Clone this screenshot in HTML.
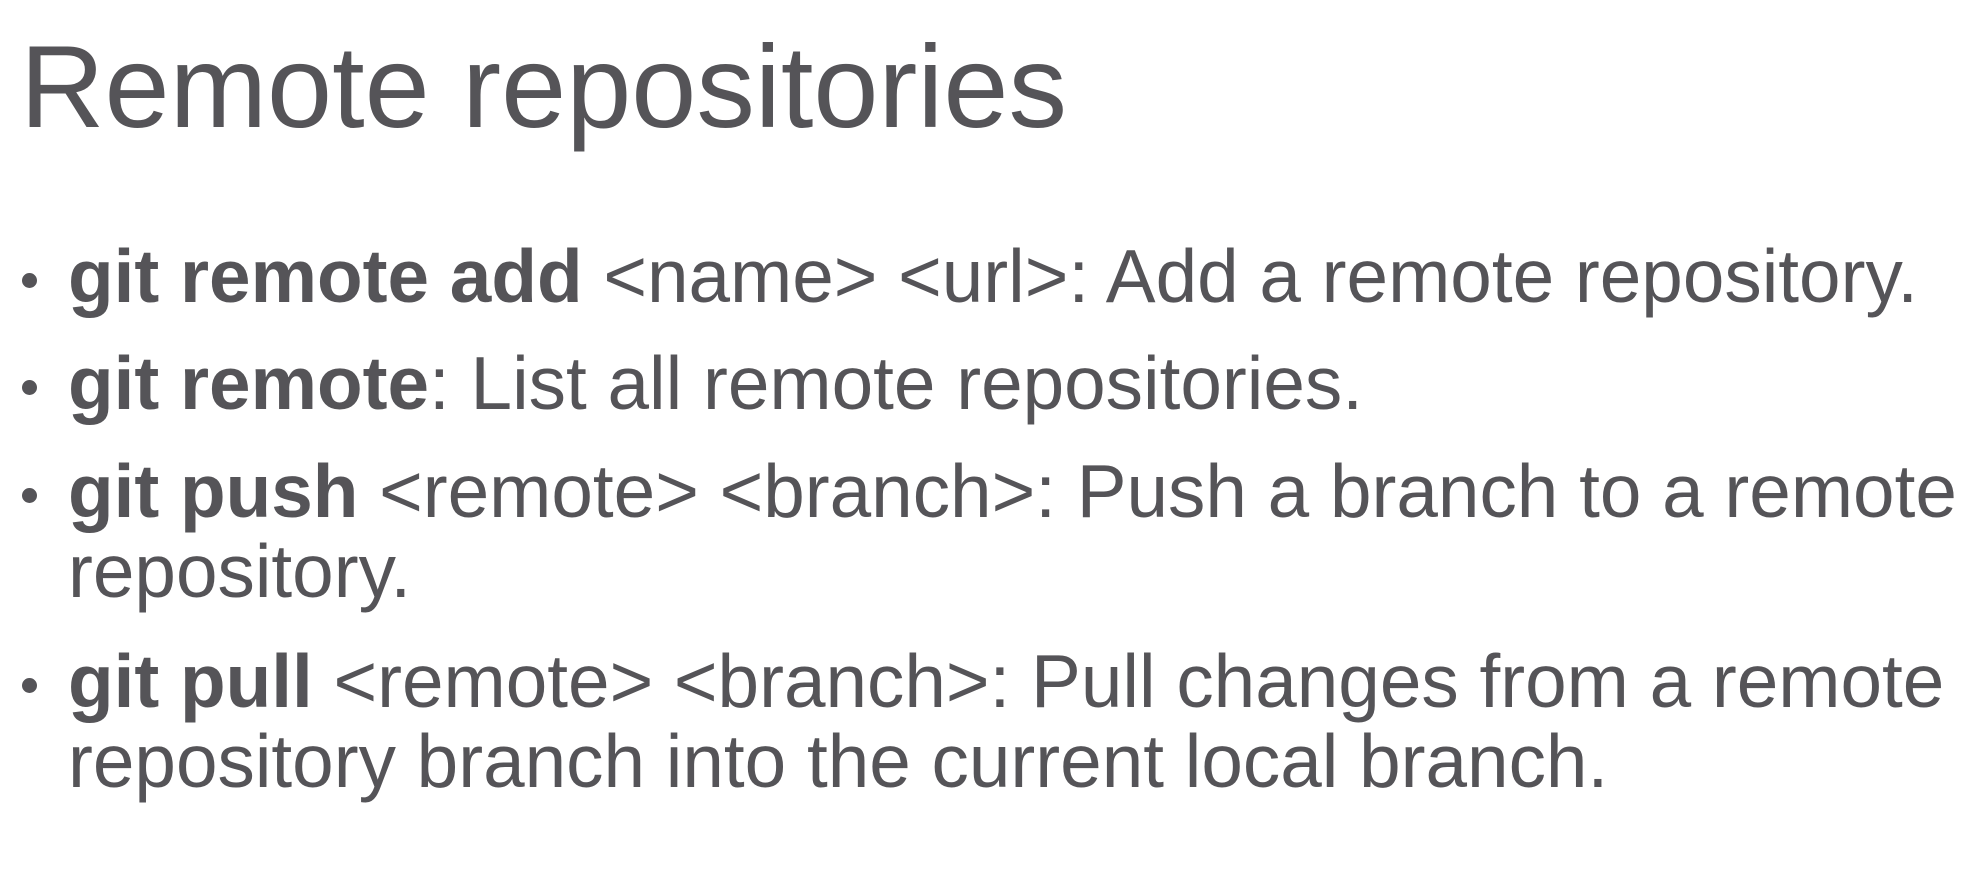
<!DOCTYPE html>
<html><head><style>
html,body{margin:0;padding:0;background:#fff;}
body{width:1985px;height:873px;position:relative;overflow:hidden;font-family:"Liberation Sans",Arial,sans-serif;color:#555458;}
.t{position:absolute;left:20px;top:22px;font-size:117px;line-height:130px;white-space:nowrap;}
.l{position:absolute;left:68px;font-size:74.7px;line-height:80px;white-space:nowrap;}
.l b{font-weight:bold;}
.d{position:absolute;left:22px;width:15px;height:15px;border-radius:50%;background:#555458;}
</style></head><body>
<div class="t">Remote repositories</div>
<div class="d" style="top:273px"></div>
<div class="l" style="top:236px"><b>git remote add</b> &lt;name&gt; &lt;url&gt;: Add a remote repository.</div>
<div class="d" style="top:380px"></div>
<div class="l" style="top:343px"><b>git remote</b>: List all remote repositories.</div>
<div class="d" style="top:488px"></div>
<div class="l" style="top:451px"><b>git push</b> &lt;remote&gt; &lt;branch&gt;: Push a branch to a remote<br>repository.</div>
<div class="d" style="top:678px"></div>
<div class="l" style="top:641px"><b>git pull</b> &lt;remote&gt; &lt;branch&gt;: Pull changes from a remote<br>repository branch into the current local branch.</div>
</body></html>
